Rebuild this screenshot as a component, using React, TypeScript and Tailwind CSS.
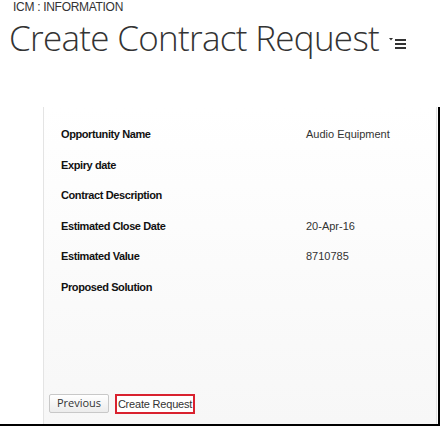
import { Fragment } from "react";

const fields = [
  { label: "Opportunity Name", value: "Audio Equipment" },
  { label: "Expiry date", value: "" },
  { label: "Contract Description", value: "" },
  { label: "Estimated Close Date", value: "20-Apr-16" },
  { label: "Estimated Value", value: "8710785" },
  { label: "Proposed Solution", value: "" },
];

function MenuIcon() {
  return (
    <svg width="18" height="12" viewBox="0 0 18 12" className="ml-[10px] mt-[10px]">
      <polygon points="0,1 4,1 2,3.5" fill="#333" />
      <rect x="6" y="2" width="11" height="2" fill="#333" />
      <rect x="6" y="6" width="11" height="2" fill="#333" />
      <rect x="6" y="10" width="11" height="2" fill="#333" />
    </svg>
  );
}

export default function App() {
  return (
    <div className="w-[440px] h-[426px] bg-white flex flex-col overflow-hidden text-[#333]" style={{ fontFamily: "'Open Sans', 'Liberation Sans', sans-serif" }}>
      <div
        className="pl-[13px] text-[12px] leading-[14px] h-[14px] whitespace-nowrap tracking-[-0.3px]"
        style={{ fontFamily: "'Liberation Sans', Arial, sans-serif" }}
      >
        ICM : INFORMATION
      </div>
      <div className="flex items-center pl-[9px] h-[47px]">
        <h1 className="text-[35px] font-light leading-none tracking-[-0.7px] text-[#333] whitespace-nowrap">
          Create Contract Request
        </h1>
        <MenuIcon />
      </div>
      <div className="flex flex-1 border-r-2 border-b-2 border-black mt-[46px]">
        <div className="w-[43px]" />
        <div className="flex-1 flex flex-col border-l border-r border-[#e4e4e4] bg-gradient-to-b from-white to-[#f7f7f7] mr-[1px]">
          <div
            className="grid grid-cols-[245px_1fr] pl-[17px] pt-[20px] gap-y-[16.5px] text-[11px] leading-[14px]"
            style={{ fontFamily: "'Liberation Sans', Arial, sans-serif" }}
          >
            {fields.map((f) => (
              <Fragment key={f.label}>
                <div className="font-bold tracking-[-0.4px] text-[#111]">{f.label}</div>
                <div className="text-[#333] h-[14px]">{f.value}</div>
              </Fragment>
            ))}
          </div>
          <div className="flex-1" />
          <div className="flex gap-[6px] pl-[5px] pb-[10px] text-[11px]">
            <button className="h-[19px] w-[60px] border border-[#c8c8c8] rounded-[2px] bg-gradient-to-b from-white to-[#ececec] text-[#333]">
              Previous
            </button>
            <button
              className="h-[20px] w-[80px] border-2 border-[#d9222f] bg-white text-[#333] whitespace-nowrap px-0 tracking-[-0.2px]"
              style={{ fontFamily: "'Liberation Sans', Arial, sans-serif" }}
            >
              Create Request
            </button>
          </div>
        </div>
      </div>
    </div>
  );
}
